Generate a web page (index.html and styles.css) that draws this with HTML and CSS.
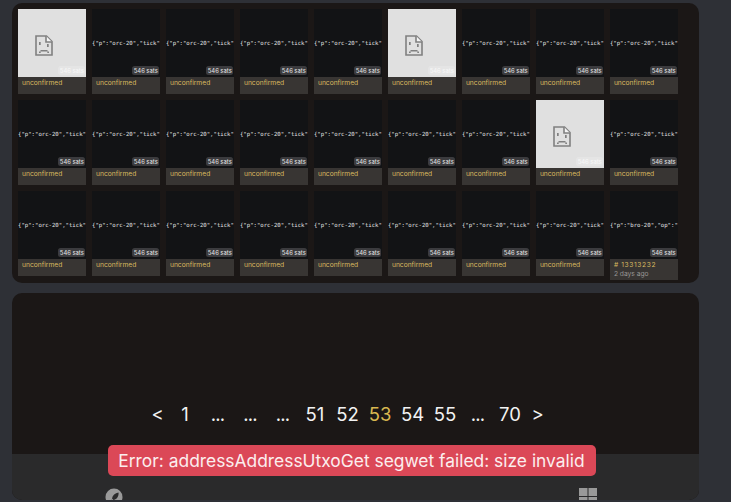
FILE: index.html
```html
<!DOCTYPE html>
<html lang="en">
<head>
<meta charset="utf-8">
<title>Inscriptions</title>
<link rel="stylesheet" href="styles.css">
</head>
<body>
<main class="page">
  <section class="panel grid" id="grid">
    <article class="card"><div class="thumb broken"><svg class="broken-icon" viewBox="0 0 18 21"><path d="M1 1H11.500L17 6.500V20H1Z" fill="none" stroke="#808080" stroke-width="1.600"/><path d="M11 1V7H17" fill="#f4f4f4" stroke="#808080" stroke-width="1.600"/><path d="M4 7h1.700v3H4zM12 9h1.700v3H12zM5.500 15h7v1.600h-7zM4 16.500h1.700v1.500H4zM12.300 16.500H14v1.500h-1.700z" fill="#808080"/></svg><span class="sats light">546 sats</span></div><div class="label"><span class="num">unconfirmed</span></div></article>
    <article class="card"><div class="thumb"><span class="code">{"p":"orc-20","tick"</span><span class="sats">546 sats</span></div><div class="label"><span class="num">unconfirmed</span></div></article>
    <article class="card"><div class="thumb"><span class="code">{"p":"orc-20","tick"</span><span class="sats">546 sats</span></div><div class="label"><span class="num">unconfirmed</span></div></article>
    <article class="card"><div class="thumb"><span class="code">{"p":"orc-20","tick"</span><span class="sats">546 sats</span></div><div class="label"><span class="num">unconfirmed</span></div></article>
    <article class="card"><div class="thumb"><span class="code">{"p":"orc-20","tick"</span><span class="sats">546 sats</span></div><div class="label"><span class="num">unconfirmed</span></div></article>
    <article class="card"><div class="thumb broken"><svg class="broken-icon" viewBox="0 0 18 21"><path d="M1 1H11.500L17 6.500V20H1Z" fill="none" stroke="#808080" stroke-width="1.600"/><path d="M11 1V7H17" fill="#f4f4f4" stroke="#808080" stroke-width="1.600"/><path d="M4 7h1.700v3H4zM12 9h1.700v3H12zM5.500 15h7v1.600h-7zM4 16.500h1.700v1.500H4zM12.300 16.500H14v1.500h-1.700z" fill="#808080"/></svg><span class="sats light">546 sats</span></div><div class="label"><span class="num">unconfirmed</span></div></article>
    <article class="card"><div class="thumb"><span class="code">{"p":"orc-20","tick"</span><span class="sats">546 sats</span></div><div class="label"><span class="num">unconfirmed</span></div></article>
    <article class="card"><div class="thumb"><span class="code">{"p":"orc-20","tick"</span><span class="sats">546 sats</span></div><div class="label"><span class="num">unconfirmed</span></div></article>
    <article class="card"><div class="thumb"><span class="code">{"p":"orc-20","tick"</span><span class="sats">546 sats</span></div><div class="label"><span class="num">unconfirmed</span></div></article>

    <article class="card"><div class="thumb"><span class="code">{"p":"orc-20","tick"</span><span class="sats">546 sats</span></div><div class="label"><span class="num">unconfirmed</span></div></article>
    <article class="card"><div class="thumb"><span class="code">{"p":"orc-20","tick"</span><span class="sats">546 sats</span></div><div class="label"><span class="num">unconfirmed</span></div></article>
    <article class="card"><div class="thumb"><span class="code">{"p":"orc-20","tick"</span><span class="sats">546 sats</span></div><div class="label"><span class="num">unconfirmed</span></div></article>
    <article class="card"><div class="thumb"><span class="code">{"p":"orc-20","tick"</span><span class="sats">546 sats</span></div><div class="label"><span class="num">unconfirmed</span></div></article>
    <article class="card"><div class="thumb"><span class="code">{"p":"orc-20","tick"</span><span class="sats">546 sats</span></div><div class="label"><span class="num">unconfirmed</span></div></article>
    <article class="card"><div class="thumb"><span class="code">{"p":"orc-20","tick"</span><span class="sats">546 sats</span></div><div class="label"><span class="num">unconfirmed</span></div></article>
    <article class="card"><div class="thumb"><span class="code">{"p":"orc-20","tick"</span><span class="sats">546 sats</span></div><div class="label"><span class="num">unconfirmed</span></div></article>
    <article class="card"><div class="thumb broken"><svg class="broken-icon" viewBox="0 0 18 21"><path d="M1 1H11.500L17 6.500V20H1Z" fill="none" stroke="#808080" stroke-width="1.600"/><path d="M11 1V7H17" fill="#f4f4f4" stroke="#808080" stroke-width="1.600"/><path d="M4 7h1.700v3H4zM12 9h1.700v3H12zM5.500 15h7v1.600h-7zM4 16.500h1.700v1.500H4zM12.300 16.500H14v1.500h-1.700z" fill="#808080"/></svg><span class="sats light">546 sats</span></div><div class="label"><span class="num">unconfirmed</span></div></article>
    <article class="card"><div class="thumb"><span class="code">{"p":"orc-20","tick"</span><span class="sats">546 sats</span></div><div class="label"><span class="num">unconfirmed</span></div></article>

    <article class="card"><div class="thumb"><span class="code">{"p":"orc-20","tick"</span><span class="sats">546 sats</span></div><div class="label"><span class="num">unconfirmed</span></div></article>
    <article class="card"><div class="thumb"><span class="code">{"p":"orc-20","tick"</span><span class="sats">546 sats</span></div><div class="label"><span class="num">unconfirmed</span></div></article>
    <article class="card"><div class="thumb"><span class="code">{"p":"orc-20","tick"</span><span class="sats">546 sats</span></div><div class="label"><span class="num">unconfirmed</span></div></article>
    <article class="card"><div class="thumb"><span class="code">{"p":"orc-20","tick"</span><span class="sats">546 sats</span></div><div class="label"><span class="num">unconfirmed</span></div></article>
    <article class="card"><div class="thumb"><span class="code">{"p":"orc-20","tick"</span><span class="sats">546 sats</span></div><div class="label"><span class="num">unconfirmed</span></div></article>
    <article class="card"><div class="thumb"><span class="code">{"p":"orc-20","tick"</span><span class="sats">546 sats</span></div><div class="label"><span class="num">unconfirmed</span></div></article>
    <article class="card"><div class="thumb"><span class="code">{"p":"orc-20","tick"</span><span class="sats">546 sats</span></div><div class="label"><span class="num">unconfirmed</span></div></article>
    <article class="card"><div class="thumb"><span class="code">{"p":"orc-20","tick"</span><span class="sats">546 sats</span></div><div class="label"><span class="num">unconfirmed</span></div></article>
    <article class="card"><div class="thumb"><span class="code">{"p":"bro-20","op":"</span><span class="sats">546 sats</span></div><div class="label"><span class="num spaced"># 13313232</span><span class="age">2 days ago</span></div></article>
  </section>

  <section class="panel lower">
    <nav class="pager">
      <span class="arrow">&lt;</span><span class="cell">1</span><span class="cell dots">...</span><span class="cell dots">...</span><span class="cell dots">...</span><span class="cell">51</span><span class="cell">52</span><span class="cell current">53</span><span class="cell">54</span><span class="cell">55</span><span class="cell dots">...</span><span class="cell">70</span><span class="arrow">&gt;</span>
    </nav>
    <footer class="tabs">
      <svg class="tab-icon" viewBox="0 0 18 18"><circle cx="9" cy="9" r="8.500" fill="#999"/><path d="M13.500 4.500C10 5 7.500 7.500 7 10.500L8.500 12C11.500 11.500 14 8.500 13.500 4.500ZM6.300 11.500L5 14L7.500 13Z" fill="#2a2a2b"/></svg>
      <svg class="tab-icon" viewBox="0 0 18 18"><path d="M0 0h8.500v8H0zM9.500 0h8.500v8H9.500zM0 9h8.500v9H0zM9.500 9h8.500v9H9.500z" fill="#999"/></svg>
    </footer>
  </section>
</main>
<div class="toast">Error: addressAddressUtxoGet segwet failed: size invalid</div>
</body>
</html>
```
FILE: styles.css
```css
html, body {
  margin: 0;
  height: 100%;
}
body {
  background: #2e3036;
  font-family: Inter, "Liberation Sans", sans-serif;
  overflow: hidden;
  position: relative;
}
.page {
  display: flex;
  flex-direction: column;
  gap: 10px;
  padding: 3px 32px 2px 12px;
  height: 100%;
  box-sizing: border-box;
}
.panel {
  background: #1b1716;
  border-radius: 10px;
}
.grid {
  display: grid;
  grid-template-columns: repeat(9, 68.33px);
  column-gap: 5.67px;
  row-gap: 6px;
  align-items: start;
  padding: 6px 6px 3px;
  height: 280px;
  box-sizing: border-box;
  flex: none;
}
.card {
  display: flex;
  flex-direction: column;
}
.thumb {
  position: relative;
  height: 68px;
  background: #121315;
  display: flex;
  align-items: center;
  overflow: hidden;
}
.thumb.broken {
  background: #e0e0e0;
  align-items: flex-start;
  padding: 26px 0 0 17px;
  box-sizing: border-box;
}
.broken-icon {
  width: 18px;
  height: 21px;
}
.code {
  font-family: "DejaVu Sans Mono", "Liberation Mono", monospace;
  font-size: 5.650px;
  font-weight: 400;
  color: #e6e6e6;
  white-space: pre;
  margin-top: -1px;
  opacity: 0.99;
}
.sats {
  position: absolute;
  right: 1px;
  bottom: 2px;
  width: 27px;
  height: 9px;
  line-height: 9px;
  text-align: center;
  font-size: 5.800px;
  font-weight: 500;
  color: #dedede;
  background: #3c3c3f;
  border-radius: 2.500px;
  white-space: nowrap;
  opacity: 0.99;
}
.sats.light {
  background: #e6e6e6;
  color: #f7f7f7;
}
.label {
  background: #383533;
  padding: 2px 4px 1px;
  display: flex;
  flex-direction: column;
  font-size: 6.700px;
  line-height: 9px;
  min-height: 17px;
  box-sizing: border-box;
}
.num {
  color: #dcbc62;
  opacity: 0.99;
}
.num.spaced {
  letter-spacing: 0.6px;
}
.age {
  color: #989795;
  opacity: 0.99;
}
.lower {
  position: relative;
  flex: 1;
  display: flex;
  flex-direction: column;
  overflow: hidden;
}
.pager {
  flex: 1;
  display: flex;
  justify-content: center;
  align-items: flex-end;
  font-size: 18.500px;
  line-height: 22px;
  color: #f2f2f2;
  padding: 0 16px 29px 0;
}
.cell {
  width: 32.500px;
  text-align: center;
}
.arrow {
  width: 22.500px;
  text-align: center;
}
.dots {
  letter-spacing: -0.8px;
}
.current {
  color: #d9b750;
}
.tabs {
  flex: none;
  height: 46px;
  background: #2a2a2b;
  display: flex;
  justify-content: space-between;
  padding: 34px 102px 0 93px;
  box-sizing: border-box;
}
.tab-icon {
  width: 18px;
  height: 18px;
}
.toast {
  position: absolute;
  left: 107.500px;
  top: 445px;
  width: 488px;
  height: 31px;
  box-sizing: border-box;
  background: #db4857;
  border-radius: 5px;
  color: #fbeeee;
  font-size: 17.400px;
  line-height: 31px;
  text-align: center;
  white-space: nowrap;
}
```
